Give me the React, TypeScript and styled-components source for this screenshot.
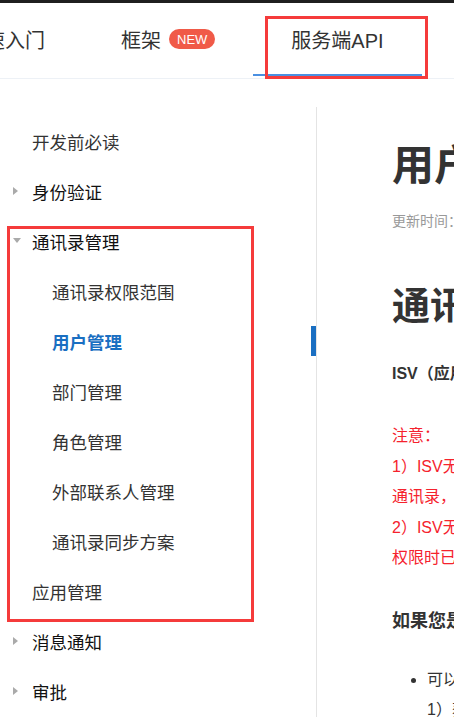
import React from "react";
import styled, { createGlobalStyle } from "styled-components";

const Global = createGlobalStyle`
  html, body { margin: 0; padding: 0; overflow: hidden; background: #fff; }
  body { font-family: "Liberation Sans", "Noto Sans CJK SC", sans-serif; color: #333; text-spacing-trim: space-all; }
  * { box-sizing: border-box; }
`;

const Page = styled.div`
  position: relative;
  width: 454px;
  height: 717px;
  overflow: hidden;
`;

const TopBar = styled.div`
  height: 3px;
  background: #1f1f1f;
`;

const Header = styled.header`
  height: 76px;
  border-bottom: 1px solid #edf1f6;
  display: flex;
  align-items: flex-start;
`;

const Tabs = styled.nav`
  display: flex;
  margin-left: -73px;
  white-space: nowrap;
`;

const Tab = styled.div<{ $active?: boolean }>`
  height: 73px;
  padding: 1px 38px 0;
  display: flex;
  align-items: center;
  gap: 8px;
  font-size: 20px;
  color: #333;
  border-bottom: 2px solid ${(p) => (p.$active ? "#4a90e2" : "transparent")};
`;

const Badge = styled.span`
  display: inline-flex;
  align-items: center;
  justify-content: center;
  height: 20px;
  padding: 0 8px;
  border-radius: 10px;
  background: #f05a48;
  color: #fff;
  font-size: 13px;
  font-family: "Liberation Sans", sans-serif;
`;

const Body = styled.div`
  display: flex;
  margin-top: 28px;
`;

const Sidebar = styled.aside`
  flex: 0 0 317px;
  border-right: 1px solid #e4e4e4;
  padding-top: 9px;
  height: 700px;
`;

const Row = styled.div<{ $level: number; $active?: boolean; $parent?: boolean }>`
  position: relative;
  height: 50px;
  display: flex;
  align-items: center;
  padding-left: ${(p) => (p.$level === 0 ? 32 : 52)}px;
  font-size: 17.5px;
  white-space: nowrap;
  color: ${(p) => (p.$active ? "#1a6fc2" : p.$parent ? "#111" : "#333")};
  font-weight: ${(p) => (p.$active ? 700 : 400)};
  ${(p) =>
    p.$active
      ? `&::after {
    content: "";
    position: absolute;
    right: 0;
    top: 10px;
    width: 5px;
    height: 30px;
    background: #1a6fc2;
  }`
      : ""}
`;

const Caret = styled.span<{ $open?: boolean }>`
  position: absolute;
  left: 13px;
  top: 50%;
  width: 0;
  height: 0;
  ${(p) =>
    p.$open
      ? `border-left: 4px solid transparent; border-right: 4px solid transparent; border-top: 5px solid #aaa; margin-top: -3px;`
      : `border-top: 4px solid transparent; border-bottom: 4px solid transparent; border-left: 5px solid #aaa; margin-top: -4px;`}
`;

const Main = styled.main`
  flex: 0 0 auto;
  width: 700px;
  padding: 34px 0 0 75px;
  white-space: nowrap;
`;

const H1 = styled.h1`
  margin: 0;
  font-size: 42px;
  line-height: 50px;
  font-weight: 700;
  color: #333;
`;

const Updated = styled.div`
  margin-top: 20px;
  font-size: 14px;
  line-height: 20px;
  color: #999;
`;

const H2 = styled.h2`
  margin: 52px 0 0;
  font-size: 38px;
  line-height: 46px;
  font-weight: 700;
  color: #333;
`;

const Lead = styled.p`
  margin: 33px 0 0;
  font-size: 16px;
  line-height: 24px;
  font-weight: 700;
  color: #333;
`;

const Notice = styled.p`
  margin: 35px 0 0;
  font-size: 16px;
  line-height: 30.5px;
  color: #f5222d;
`;

const H3 = styled.h3`
  margin: 33px 0 0;
  font-size: 18px;
  line-height: 28px;
  font-weight: 700;
  color: #333;
`;

const List = styled.ul`
  margin: 30px 0 0;
  padding-left: 35px;
  font-size: 16px;
  line-height: 30px;
  color: #333;
  li::marker { color: #333; }
`;

const Annotation = styled.div`
  position: absolute;
  border: 3px solid #f53b3b;
  pointer-events: none;
`;

type Item = { label: string; level: number; caret?: "open" | "closed"; active?: boolean };

const items: Item[] = [
  { label: "开发前必读", level: 0 },
  { label: "身份验证", level: 0, caret: "closed" },
  { label: "通讯录管理", level: 0, caret: "open" },
  { label: "通讯录权限范围", level: 1 },
  { label: "用户管理", level: 1, active: true },
  { label: "部门管理", level: 1 },
  { label: "角色管理", level: 1 },
  { label: "外部联系人管理", level: 1 },
  { label: "通讯录同步方案", level: 1 },
  { label: "应用管理", level: 0 },
  { label: "消息通知", level: 0, caret: "closed" },
  { label: "审批", level: 0, caret: "closed" },
];

export default function App() {
  return (
    <Page lang="zh-CN">
      <Global />
      <TopBar />
      <Header>
        <Tabs>
          <Tab>快速入门</Tab>
          <Tab>
            框架<Badge>NEW</Badge>
          </Tab>
          <Tab $active>服务端API</Tab>
        </Tabs>
      </Header>
      <Body>
        <Sidebar>
          {items.map((it) => (
            <Row key={it.label} $level={it.level} $active={it.active} $parent={!!it.caret}>
              {it.caret && <Caret $open={it.caret === "open"} />}
              {it.label}
            </Row>
          ))}
        </Sidebar>
        <Main>
          <H1>用户管理</H1>
          <Updated>更新时间：2020-06-10 15:30:12</Updated>
          <H2>通讯录管理</H2>
          <Lead>ISV（应用服务商）可以通过以下接口管理企业的通讯录</Lead>
          <Notice>
            注意：
            <br />
            1）ISV无法获取企业的全部通讯录信息，只能获取授权范围内的
            <br />
            通讯录，授权范围由企业管理员在授权时设置。
            <br />
            2）ISV无法调用写接口修改通讯录，除非企业管理员在授予
            <br />
            权限时已经勾选了通讯录写权限。
          </Notice>
          <H3>如果您是企业内部开发者</H3>
          <List>
            <li>
              可以调用以下接口管理通讯录：
              <br />
              1）获取用户详情
            </li>
          </List>
        </Main>
      </Body>
      <Annotation style={{ left: 265, top: 16, width: 163, height: 63 }} />
      <Annotation style={{ left: 7, top: 226, width: 247, height: 396 }} />
    </Page>
  );
}
